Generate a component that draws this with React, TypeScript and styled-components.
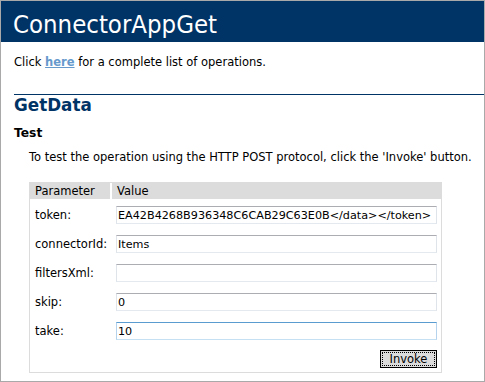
import React from "react";
import styled, { createGlobalStyle } from "styled-components";

const Global = createGlobalStyle`
  html, body { margin: 0; padding: 0; background: #ffffff; }
  * { box-sizing: border-box; }
`;

const Frame = styled.div`
  width: 485px;
  height: 382px;
  border: 1px solid #a9a9a9;
  overflow: hidden;
  background: #ffffff;
  font-family: "DejaVu Sans", Verdana, sans-serif;
  font-size: 11.5px;
  color: #000000;
`;

const Heading = styled.div`
  background: #003366;
  color: #ffffff;
  font-family: "DejaVu Sans Condensed", "DejaVu Sans", Tahoma, sans-serif;
  font-size: 25.5px;
  line-height: 30px;
  padding: 8px 0 3px 12px;
  height: 41px;
  white-space: nowrap;
`;

const Content = styled.div`
  padding-left: 28px;
`;

const Intro = styled.p`
  margin: 13px 0 0 -15px;
  line-height: 14px;
`;

const Link = styled.a`
  color: #6699cc;
  font-weight: bold;
  text-decoration: underline;
`;

const OpTitle = styled.h2`
  margin: 25px 0 11px -15px;
  border-top: 1px solid #003366;
  font-size: 16.8px;
  line-height: 20px;
  font-weight: bold;
  color: #003366;
`;

const SubTitle = styled.h3`
  margin: 0 0 0 -15px;
  font-size: 12.3px;
  line-height: 15px;
  font-weight: bold;
  color: #000000;
`;

const Para = styled.p`
  margin: 9px 0 0 0;
  line-height: 14px;
  white-space: nowrap;
`;

const Table = styled.div`
  margin-top: 18px;
  width: 413px;
  border: 1px solid #dcdcdc;
  display: grid;
  grid-template-columns: 80px 2px 329px;
`;

const HeadCell = styled.div`
  background: #dcdcdc;
  line-height: 14px;
  padding: 1px 4px 1px 5px;
`;

const HeadGap = styled.div`
  background: #ffffff;
`;

const LabelCell = styled.div<{ $first?: boolean }>`
  display: flex;
  align-items: center;
  padding: ${(p) => (p.$first ? "7px" : "5px")} 4px 6px 5px;
  white-space: nowrap;
  line-height: 14px;
`;

const InputCell = styled.div<{ $first?: boolean }>`
  grid-column: 3;
  padding: ${(p) => (p.$first ? "7px" : "5px")} 4px 6px 4px;
`;

const Field = styled.input<{ $focused?: boolean }>`
  display: block;
  width: 321px;
  height: 18px;
  margin: 0;
  padding: 0 1px;
  font-family: "DejaVu Sans", Verdana, sans-serif;
  font-size: 11.2px;
  color: #000000;
  background: #ffffff;
  border-style: solid;
  border-width: 1px;
  border-color: ${(p) =>
    p.$focused
      ? "#5a9bd0 #b5d3ec #c5e0f3 #b5d3ec"
      : "#abadb3 #dfe3ea #e3e9ef #dfe3ea"};
  outline: none;
`;

const ActionCell = styled.div`
  grid-column: 3;
  display: flex;
  justify-content: flex-end;
  padding: 4px 4px 4px 4px;
`;

const Button = styled.button`
  height: 18px;
  width: 57px;
  padding: 0;
  margin: 0;
  font-family: "DejaVu Sans", Verdana, sans-serif;
  font-size: 11.5px;
  line-height: 14px;
  color: #000000;
  background: #dcdcdc;
  border: 1px solid #000000;
  outline: 1px dotted #000000;
  outline-offset: -3px;
`;

const params: { name: string; value: string; focused?: boolean }[] = [
  { name: "token", value: "EA42B4268B936348C6CAB29C63E0B</data></token>" },
  { name: "connectorId", value: "Items" },
  { name: "filtersXml", value: "" },
  { name: "skip", value: "0" },
  { name: "take", value: "10", focused: true },
];

export default function App() {
  return (
    <>
      <Global />
      <Frame>
        <Heading>ConnectorAppGet</Heading>
        <Content>
          <Intro>
            Click <Link href="#">here</Link> for a complete list of operations.
          </Intro>
          <OpTitle>GetData</OpTitle>
          <SubTitle>Test</SubTitle>
          <Para>
            To test the operation using the HTTP POST protocol, click the 'Invoke' button.
          </Para>
          <Table>
            <HeadCell>Parameter</HeadCell>
            <HeadGap />
            <HeadCell>Value</HeadCell>
            {params.map((p, i) => (
              <React.Fragment key={p.name}>
                <LabelCell $first={i === 0}>{p.name}:</LabelCell>
                <InputCell $first={i === 0}>
                  <Field
                    type="text"
                    name={p.name}
                    defaultValue={p.value}
                    $focused={p.focused}
                  />
                </InputCell>
              </React.Fragment>
            ))}
            <ActionCell>
              <Button type="button">Invoke</Button>
            </ActionCell>
          </Table>
        </Content>
      </Frame>
    </>
  );
}
